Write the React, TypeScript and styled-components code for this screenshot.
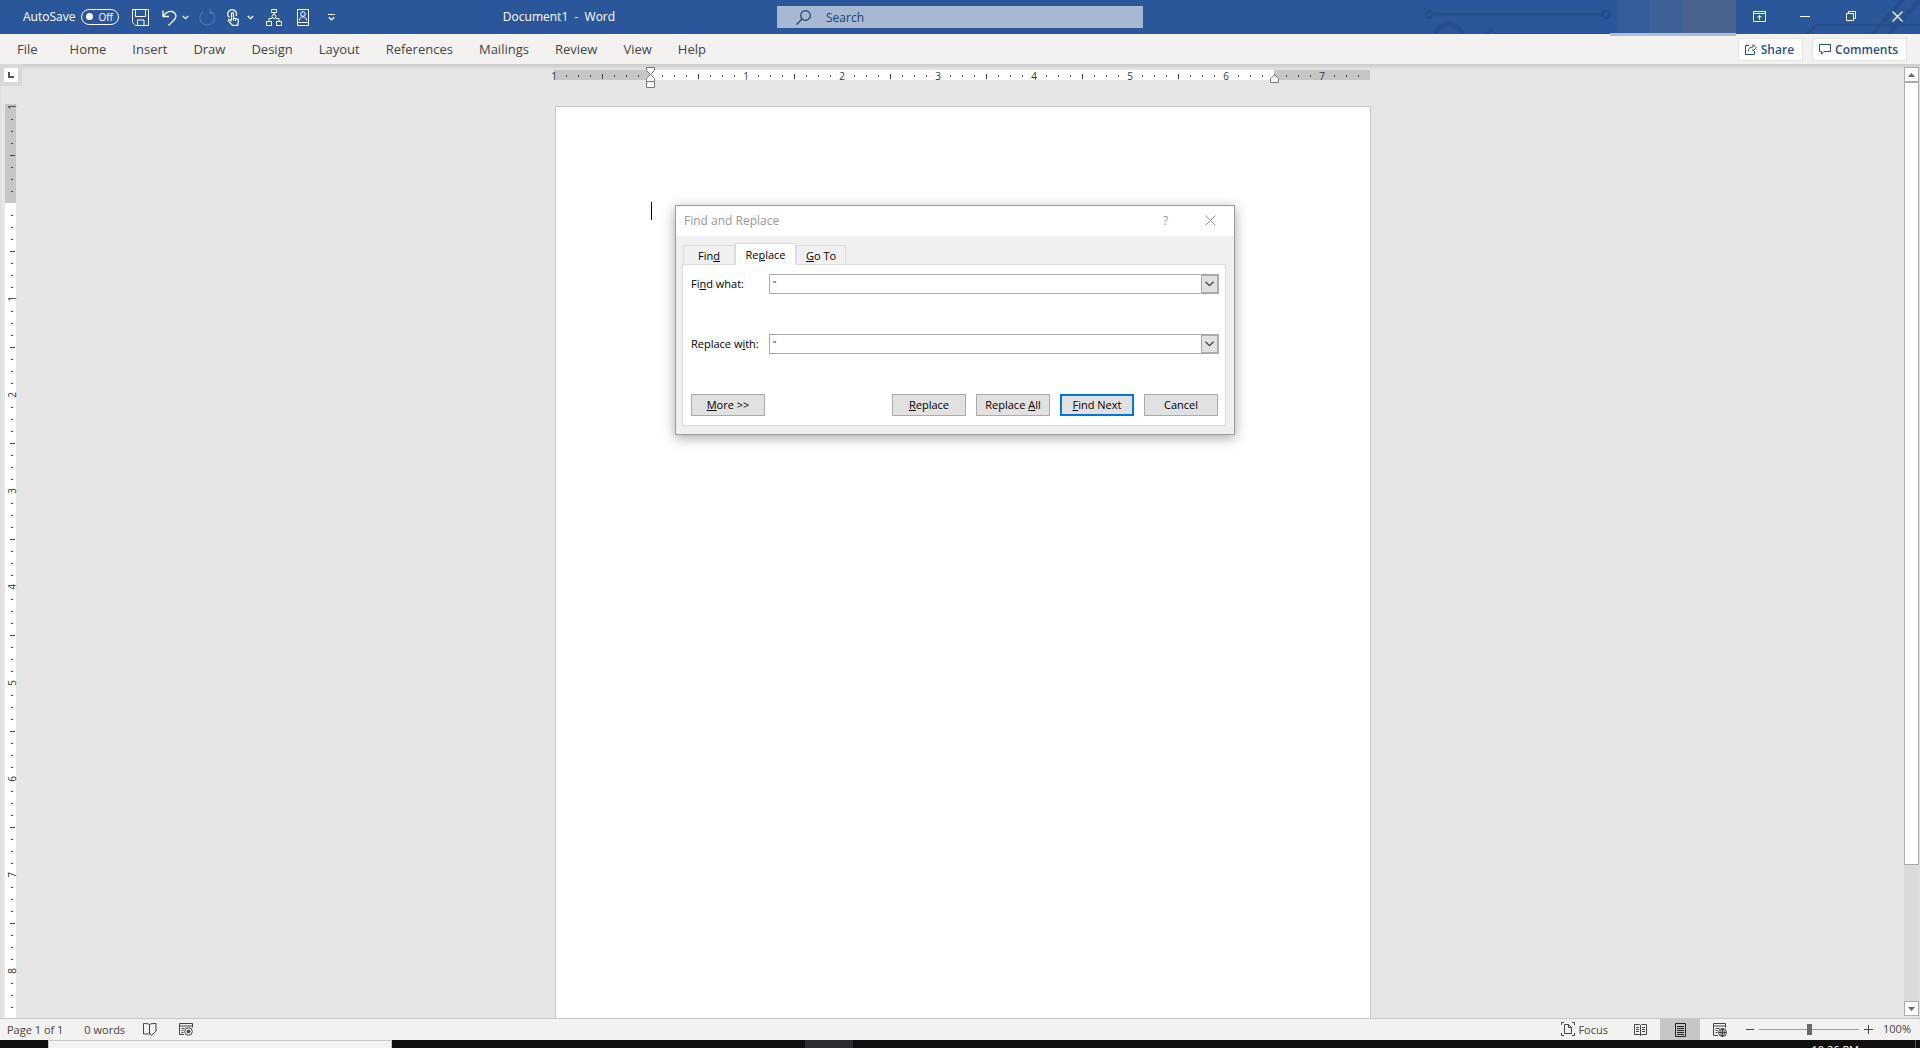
import React from "react";
import styled, { createGlobalStyle } from "styled-components";

const GlobalStyle = createGlobalStyle`
  * { box-sizing: border-box; }
  html, body { margin: 0; padding: 0; }
  body, button, input {
    font-family: "Open Sans", "Noto Sans", sans-serif;
  }
  button, input { margin: 0; }
  button {
    padding: 0;
    border: 0;
    background: none;
    color: inherit;
    font-size: inherit;
    display: flex;
    align-items: center;
    justify-content: center;
    flex: none;
  }
  svg { display: block; flex: none; }
`;

const Window = styled.div`
  height: 100vh;
  display: flex;
  flex-direction: column;
  overflow: hidden;
  background: #e6e6e6;
`;

/* ---------- title bar ---------- */

const TitleBar = styled.header`
  position: relative;
  flex: none;
  height: 34px;
  display: grid;
  grid-template-columns: 1fr 366px 1fr;
  align-items: center;
  background: #2b579a;
  color: #fff;
  font-size: 12px;
`;

const TitleLeft = styled.div`
  display: flex;
  align-items: center;
  height: 34px;
  padding: 0 0 1px 23px;
`;

const AutoSave = styled.label`
  display: flex;
  align-items: center;
  gap: 6px;
  width: 96px;
`;

const Toggle = styled.span`
  display: flex;
  align-items: center;
  justify-content: space-between;
  width: 38px;
  height: 16px;
  padding: 0 5px 0 4px;
  border: 1px solid #fff;
  border-radius: 8px;
  font-size: 10px;
  line-height: 14px;

  &::before {
    content: "";
    width: 7px;
    height: 7px;
    border-radius: 50%;
    background: #fff;
  }
`;

const HiddenCheck = styled.input`
  position: absolute;
  opacity: 0;
  width: 1px;
  height: 1px;
`;

const QuickTools = styled.div`
  display: flex;
  align-items: center;
  padding: 2px 0 0 13px;
`;

const QuickButton = styled.button<{ $after: number }>`
  height: 20px;
  margin-right: ${(p) => p.$after}px;
`;

const DocTitle = styled.div`
  flex: 1;
  text-align: center;
  white-space: pre;
`;

const SearchBox = styled.label`
  display: flex;
  align-items: center;
  gap: 15px;
  height: 22px;
  padding-left: 19px;
  background: #a6b8d3;
  color: #1e3e70;
`;

const SearchInput = styled.input`
  flex: 1;
  min-width: 0;
  padding: 0;
  border: 0;
  outline: 0;
  background: none;
  font-size: 12px;
  color: #1e3e70;
  &::placeholder { color: #1e3e70; opacity: 1; }
`;

const TitleRight = styled.div`
  position: relative;
  display: flex;
  justify-content: flex-end;
  height: 34px;
`;

const Artwork = styled.svg`
  position: absolute;
  right: 0;
  top: 0;
`;

const Account = styled.div`
  position: relative;
  width: 126px;
  height: 36px;
  padding-left: 7px;
  display: grid;
  grid-template-columns: 33px 33px 1fr;
  z-index: 1;

  &::after {
    content: "";
    position: absolute;
    left: 0;
    right: 0;
    bottom: 0;
    height: 3px;
    background: #b3bbd5;
  }
`;

const Shade = styled.span<{ $tone: string }>`
  background: ${(p) => p.$tone};
`;

const WindowButton = styled.button`
  position: relative;
  width: 46px;
  height: 32px;
`;

/* ---------- ribbon tabs ---------- */

const TabBar = styled.nav`
  flex: none;
  display: flex;
  align-items: center;
  height: 30px;
  padding: 0 13px 0 4px;
  background: #f3f2f1;
  color: #444;
  font-size: 13px;
`;

const RibbonTab = styled.button`
  height: 30px;
  padding: 0 13px;
  &:first-child { margin-right: 6px; }
`;

const RibbonActions = styled.div`
  margin-left: auto;
  display: flex;
  gap: 9px;
`;

const ActionButton = styled.button`
  height: 23px;
  padding: 0 8px 0 6px;
  gap: 4px;
  border: 1px solid #e6e4e2;
  background: #fff;
  color: #2b4f84;
  font-size: 12px;
  font-weight: 600;
`;

/* ---------- workspace ---------- */

const Workspace = styled.main`
  flex: 1;
  min-height: 0;
  display: grid;
  grid-template-columns: 22px 1fr 16px;
  overflow: hidden;
  background: #e6e6e6;
  box-shadow: inset 0 4px 4px -1px #cacaca;
`;

const Gutter = styled.div`
  display: flex;
  flex-direction: column;
  min-height: 0;
  overflow: hidden;
`;

const TabSelector = styled.button`
  width: 22px;
  height: 22px;
  border: 4px solid #d8d8d8;
  background: #fff;
`;

const SideRuler = styled.div`
  flex: 1;
  width: 11px;
  margin: 18px 0 0 5px;
  min-height: 0;
  background: linear-gradient(#c6c6c6 99px, #fff 99px);
`;

const SideCell = styled.div`
  height: 12px;
  margin-left: 3px;
  display: flex;
  align-items: center;
  justify-content: center;
  &:first-child { margin-top: -3px; }
`;

const Canvas = styled.div`
  min-width: 0;
  min-height: 0;
  display: flex;
  flex-direction: column;
  align-items: center;
  padding-top: 6px;
  overflow: hidden;
`;

const TopRuler = styled.div`
  position: relative;
  flex: none;
  display: flex;
  width: 816px;
  height: 10px;
  margin-right: 2px;
  background: linear-gradient(90deg, #c6c6c6 96px, #fff 96px, #fff 720px, #c6c6c6 720px);
`;

const TopCell = styled.div`
  flex: none;
  width: 12px;
  height: 12px;
  display: flex;
  align-items: center;
  justify-content: center;
  &:first-child { margin-left: -6px; }
`;

const Tick = styled.span<{ $w: number; $h: number }>`
  width: ${(p) => p.$w}px;
  height: ${(p) => p.$h}px;
  background: #444;
`;

const RulerNumber = styled.span<{ $side?: boolean }>`
  font-size: 10px;
  line-height: 10px;
  color: #333;
  ${(p) => (p.$side ? "transform: rotate(-90deg);" : "")}
`;

const Marker = styled.svg<{ $x: number; $y: number }>`
  position: absolute;
  left: ${(p) => p.$x}px;
  top: ${(p) => p.$y}px;
`;

const Page = styled.article`
  position: relative;
  flex: none;
  width: 816px;
  height: 1056px;
  margin-top: 26px;
  border: 1px solid #c6c6c6;
  background: #fff;
`;

const Caret = styled.span`
  display: block;
  width: 1px;
  height: 18px;
  margin: 95px 0 0 95px;
  background: #000;
`;

const ScrollBar = styled.div`
  display: flex;
  flex-direction: column;
  min-height: 0;
  margin: 3px 1px 2px 0;
  background: #dadada;
`;

const ScrollButton = styled.button`
  height: 15px;
  border: 1px solid #ababab;
  background: #fff;
`;

const ScrollThumb = styled.div`
  flex: 783 1 0;
  border: 1px solid #ababab;
  background: #fff;
`;

const ScrollSpace = styled.div`
  flex: 136 1 0;
`;

/* ---------- find and replace dialog ---------- */

const Dialog = styled.section`
  position: absolute;
  left: 119px;
  top: 98px;
  width: 560px;
  padding-bottom: 8px;
  border: 1px solid #9b9b9b;
  background: #f0f0f0;
  box-shadow: 0 3px 12px rgba(0, 0, 0, 0.35);
  color: #000;
  font-size: 11px;
`;

const DialogHeader = styled.div`
  display: flex;
  align-items: center;
  height: 30px;
  padding: 0 1px 2px 8px;
  background: #fff;
  color: #999;
`;

const DialogTitle = styled.h1`
  flex: 1;
  margin: 0;
  font-size: 12px;
  font-weight: 400;
`;

const DialogIconButton = styled.button`
  width: 45px;
  height: 28px;
  font-size: 12px;
`;

const DialogTabs = styled.div`
  display: flex;
  align-items: flex-end;
  height: 28px;
  margin-left: 7px;
`;

const DialogTab = styled.button<{ $active?: boolean; $width: number }>`
  position: relative;
  z-index: ${(p) => (p.$active ? 1 : 0)};
  width: ${(p) => p.$width}px;
  height: ${(p) => (p.$active ? 22 : 19)}px;
  margin-bottom: ${(p) => (p.$active ? -1 : 0)}px;
  border: 1px solid #dcdcdc;
  border-bottom: 0;
  background: ${(p) => (p.$active ? "#fff" : "#f0f0f0")};
`;

const DialogPanel = styled.form`
  margin: 0 8px 0 6px;
  padding: 9px 6px 9px 8px;
  border: 1px solid #dcdcdc;
  background: #fff;
`;

const Field = styled.div`
  display: flex;
  align-items: center;
  height: 20px;
  margin-bottom: 40px;
`;

const FieldLabel = styled.label`
  width: 78px;
  line-height: 16px;
  padding-bottom: 1px;
`;

const Combo = styled.div`
  flex: 1;
  display: flex;
  height: 20px;
  border: 1px solid #ababab;
`;

const ComboInput = styled.input`
  flex: 1;
  min-width: 0;
  padding: 0 3px;
  border: 0;
  outline: 0;
  font-family: "Liberation Sans", sans-serif;
  font-size: 9px;
  color: #333;
`;

const ComboButton = styled.button`
  width: 17px;
  border: 1px solid #ababab;
  background: #e1e1e1;
`;

const ButtonRow = styled.div`
  display: flex;
  gap: 10px;
  padding-right: 1px;
`;

const PushButton = styled.button<{ $primary?: boolean }>`
  width: 74px;
  height: 22px;
  border: ${(p) => (p.$primary ? "2px solid #0078d7" : "1px solid #ababab")};
  background: #e1e1e1;
  white-space: pre;
  line-height: 16px;
  &:first-child { margin-right: auto; }
`;

/* ---------- status bar ---------- */

const StatusBar = styled.footer`
  flex: none;
  display: flex;
  align-items: flex-start;
  height: 22px;
  padding: 0 9px 0 7px;
  border-top: 1px solid #c6c6c6;
  background: #f3f2f1;
  color: #444;
  font-size: 11px;
`;

const StatusItem = styled.button<{ $after?: number }>`
  height: 20px;
  gap: 3px;
  margin-right: ${(p) => p.$after ?? 0}px;
`;

const StatusRight = styled.div`
  margin-left: auto;
  display: flex;
  align-items: flex-start;
`;

const ViewButton = styled.button<{ $active?: boolean }>`
  width: 40px;
  height: 21px;
  background: ${(p) => (p.$active ? "#c6c6c6" : "transparent")};
`;

const ZoomButton = styled.button`
  width: 19px;
  height: 20px;
`;

const ZoomSlider = styled.input`
  appearance: none;
  width: 100px;
  height: 20px;
  background: linear-gradient(#a0a0a0, #a0a0a0) center / 100% 1px no-repeat;
  &::-webkit-slider-thumb {
    appearance: none;
    width: 5px;
    height: 11px;
    background: #6a6a6a;
  }
`;

const ZoomValue = styled.output`
  width: 33px;
  line-height: 20px;
  text-align: right;
`;

/* ---------- desktop taskbar ---------- */

const Taskbar = styled.div`
  flex: none;
  display: flex;
  height: 8px;
  overflow: hidden;
  background: #101010;
  color: #fff;
`;

const TaskSearch = styled.div`
  width: 344px;
  margin-left: 48px;
  border: 1px solid #c6c6c6;
  border-bottom: 0;
  background: #f3f3f3;
`;

const TaskActive = styled.div`
  width: 48px;
  margin-left: 413px;
  background: #2c2c30;
`;

const Clock = styled.time`
  margin: 2px 56px 0 auto;
  font-size: 11px;
  line-height: 15px;
  white-space: nowrap;
`;

const DesktopEdge = styled.span`
  width: 5px;
  border-left: 1px solid #555;
`;

/* ---------- icons ---------- */

type IconProps = { w: number; h: number; children: React.ReactNode; color?: string };
const Icon = ({ w, h, children, color = "currentColor" }: IconProps) => (
  <svg width={w} height={h} viewBox={`0 0 ${w} ${h}`} fill="none" stroke={color} aria-hidden="true">
    {children}
  </svg>
);

const Chevron = () => (
  <Icon w={7} h={5}><path d="M.8 1l2.7 2.6L6.2 1" strokeWidth="1.3" /></Icon>
);

const Artworks = () => (
  <Artwork width="520" height="34" viewBox="0 0 520 34" fill="none" stroke="#264e8c" aria-hidden="true">
    <circle cx="29" cy="14.500" r="3.500" strokeWidth="2.500" />
    <path d="M33 14.500h170" strokeWidth="3.500" />
    <circle cx="206" cy="14.500" r="3.500" strokeWidth="2.500" />
    <circle cx="49" cy="38" r="14" strokeWidth="5" />
    <circle cx="91" cy="33" r="3" strokeWidth="2.500" />
    <path d="M95 34h130" strokeWidth="2" />
    <path d="M407 34l9-9h104" strokeWidth="2.500" />
    <path d="M472 34L503 0M489 34L520 0" strokeWidth="4" />
  </Artwork>
);

/* ---------- rulers ---------- */

const inchMark = (eighth: number) => {
  const offset = eighth - 8;
  if (offset === 0) return "none";
  if (offset % 8 === 0) return String(Math.abs(offset / 8));
  return offset % 4 === 0 ? "half" : "dot";
};

const topMarks = Array.from({ length: 68 }, (_, i) => inchMark(i));
const sideMarks = Array.from({ length: 77 }, (_, i) => inchMark(i));

const HorizontalRuler = () => (
  <TopRuler>
    {topMarks.map((m, i) => (
      <TopCell key={i}>
        {m === "half" ? <Tick $w={1} $h={5} /> : m === "dot" ? <Tick $w={1} $h={2} /> : m !== "none" && <RulerNumber>{m}</RulerNumber>}
      </TopCell>
    ))}
    <Marker $x={92} $y={-3} width="9" height="22" viewBox="0 0 9 22" fill="#fff" stroke="#777" aria-hidden="true">
      <path d="M.5.500h8v3l-4 4-4-4zM4.500 7.500l4 4v3h-8v-3zM.5 14.500h8v6h-8z" />
    </Marker>
    <Marker $x={716} $y={4} width="9" height="9" viewBox="0 0 9 9" fill="#fff" stroke="#777" aria-hidden="true">
      <path d="M4.500.700l4 4v3.800h-8V4.700z" />
    </Marker>
  </TopRuler>
);

const VerticalRuler = () => (
  <SideRuler>
    {sideMarks.map((m, i) => (
      <SideCell key={i}>
        {m === "half" ? <Tick $w={5} $h={1} /> : m === "dot" ? <Tick $w={2} $h={1} /> : m !== "none" && <RulerNumber $side>{m}</RulerNumber>}
      </SideCell>
    ))}
  </SideRuler>
);

const FindReplace = () => (
  <Dialog role="dialog" aria-labelledby="dialog-title">
    <DialogHeader>
      <DialogTitle id="dialog-title">Find and Replace</DialogTitle>
      <DialogIconButton type="button" aria-label="Help">?</DialogIconButton>
      <DialogIconButton type="button" aria-label="Close">
        <Icon w={11} h={11}><path d="M.5.500l10 10M10.500.500l-10 10" /></Icon>
      </DialogIconButton>
    </DialogHeader>
    <DialogTabs role="tablist">
      <DialogTab type="button" role="tab" $width={52}><span>Fin<u>d</u></span></DialogTab>
      <DialogTab type="button" role="tab" aria-selected="true" $active $width={61}><span>Re<u>p</u>lace</span></DialogTab>
      <DialogTab type="button" role="tab" $width={50}><span><u>G</u>o To</span></DialogTab>
    </DialogTabs>
    <DialogPanel>
      <Field>
        <FieldLabel htmlFor="find-what">Fi<u>n</u>d what:</FieldLabel>
        <Combo>
          <ComboInput id="find-what" defaultValue={'"'} />
          <ComboButton type="button" aria-label="Recent searches">
            <Icon w={9} h={6} color="#444"><path d="M.5.700l4 4 4-4" strokeWidth="1.300" /></Icon>
          </ComboButton>
        </Combo>
      </Field>
      <Field>
        <FieldLabel htmlFor="replace-with">Replace w<u>i</u>th:</FieldLabel>
        <Combo>
          <ComboInput id="replace-with" defaultValue={'"'} />
          <ComboButton type="button" aria-label="Recent replacements">
            <Icon w={9} h={6} color="#444"><path d="M.5.700l4 4 4-4" strokeWidth="1.300" /></Icon>
          </ComboButton>
        </Combo>
      </Field>
      <ButtonRow>
        <PushButton type="button"><span><u>M</u>ore &gt;&gt;</span></PushButton>
        <PushButton type="button"><span><u>R</u>eplace</span></PushButton>
        <PushButton type="button"><span>Replace <u>A</u>ll</span></PushButton>
        <PushButton type="button" $primary><span><u>F</u>ind Next</span></PushButton>
        <PushButton type="button">Cancel</PushButton>
      </ButtonRow>
    </DialogPanel>
  </Dialog>
);

const ribbonTabs = ["File", "Home", "Insert", "Draw", "Design", "Layout", "References", "Mailings", "Review", "View", "Help"];

export default function App() {
  return (
    <Window>
      <GlobalStyle />
      <TitleBar>
        <TitleLeft>
          <AutoSave>
            AutoSave
            <HiddenCheck type="checkbox" />
            <Toggle>Off</Toggle>
          </AutoSave>
          <QuickTools>
            <QuickButton $after={13} aria-label="Save">
              <Icon w={17} h={17}>
                <path d="M.5.500h16v16H3.500l-3-3zM3.500.500v7h10v-7M5.500 16v-5h6.500v5" />
              </Icon>
            </QuickButton>
            <QuickButton $after={5} aria-label="Undo">
              <Icon w={15} h={16}>
                <path d="M1 .5v6h6M1.200 6.200C4 2.500 7 1 10 1.500c4 .8 5 5 2.500 8L6.500 15.500" strokeWidth="1.300" />
              </Icon>
            </QuickButton>
            <QuickButton $after={10} aria-label="Undo list"><Chevron /></QuickButton>
            <QuickButton $after={11} aria-label="Redo">
              <Icon w={17} h={17} color="#4a74b4">
                <path d="M11 .5v4h4.500M12 2.500a7.300 7.300 0 1 1-7.500 0" strokeWidth="1.200" />
              </Icon>
            </QuickButton>
            <QuickButton $after={8} aria-label="Touch mode">
              <Icon w={12} h={17}>
                <path d="M2.500 8.500a4.300 4.300 0 1 1 6.500-1.500M4.500 11V4.500c0-1.300 2-1.300 2 0V9l4 1c.8.300 1 .8.900 1.500l-.6 4.800H5.500L1.500 12c-.6-1 .6-2 1.500-1.200l1.500 1.400M6.500 9v2.500M8.500 9.500V12" strokeWidth="1.200" />
              </Icon>
            </QuickButton>
            <QuickButton $after={12} aria-label="Touch mode list"><Chevron /></QuickButton>
            <QuickButton $after={15} aria-label="Organization chart">
              <Icon w={16} h={17}>
                <path d="M5.500.500h5v3h-5zM.5 12.500h5v4h-5zM10.500 12.500h5v4h-5zM8 3.500v2M3 12.500v-3h3M13 12.500v-3h-3" />
                <circle cx="8" cy="7.500" r="2" />
              </Icon>
            </QuickButton>
            <QuickButton $after={19} aria-label="Address book">
              <Icon w={12} h={17}>
                <path d="M.5.500h11v16H.5zM.5 13.500h11M2.500 11.500c0-5 7-5 7 0" />
                <circle cx="6" cy="5" r="2.300" />
              </Icon>
            </QuickButton>
            <QuickButton $after={6} aria-label="Customize toolbar">
              <Icon w={7} h={7}><path d="M0 .5h7M.8 3.200l2.700 2.600 2.700-2.600" strokeWidth="1.200" /></Icon>
            </QuickButton>
          </QuickTools>
          <DocTitle>{"Document1  -  Word"}</DocTitle>
        </TitleLeft>
        <SearchBox>
          <Icon w={15} h={15}>
            <circle cx="9.500" cy="5.500" r="4.800" strokeWidth="1.200" />
            <path d="M6 9L.5 14.500" strokeWidth="1.300" />
          </Icon>
          <SearchInput aria-label="Search" placeholder="Search" />
        </SearchBox>
        <TitleRight>
          <Artworks />
          <Account>
            <Shade $tone="#345e9b" />
            <Shade $tone="#3d6297" />
            <Shade $tone="#4a638f" />
          </Account>
          <WindowButton aria-label="Ribbon display options">
            <Icon w={13} h={11}><path d="M.5.500h12v10H.5zM.5 2.500h12M6.500 9V4.500M4.300 6.500l2.200-2 2.200 2" /></Icon>
          </WindowButton>
          <WindowButton aria-label="Minimize">
            <Icon w={10} h={1}><path d="M0 .5h10" /></Icon>
          </WindowButton>
          <WindowButton aria-label="Restore">
            <Icon w={10} h={10}><path d="M.5 2.500h7v7h-7zM2.500 2.500v-2h7v7h-2" /></Icon>
          </WindowButton>
          <WindowButton aria-label="Close">
            <Icon w={11} h={11}><path d="M.5.500l10 10M10.500.500l-10 10" strokeWidth="1.200" /></Icon>
          </WindowButton>
        </TitleRight>
      </TitleBar>

      <TabBar>
        {ribbonTabs.map((t) => <RibbonTab key={t}>{t}</RibbonTab>)}
        <RibbonActions>
          <ActionButton>
            <Icon w={12} h={12}><path d="M4 2.500H.5v9h9V8M3 8.500c.3-3 2-4.500 5-4.500V1.500l3.300 3.300L8 8V5.800" /></Icon>
            Share
          </ActionButton>
          <ActionButton>
            <Icon w={12} h={11}><path d="M.5.500h11v7H5l-2.500 2.700V7.500h-2z" /></Icon>
            Comments
          </ActionButton>
        </RibbonActions>
      </TabBar>

      <Workspace>
        <Gutter>
          <TabSelector aria-label="Tab selector">
            <Icon w={6} h={6} color="#555"><path d="M1 0v5h5" strokeWidth="2" /></Icon>
          </TabSelector>
          <VerticalRuler />
        </Gutter>
        <Canvas>
          <HorizontalRuler />
          <Page>
            <Caret />
            <FindReplace />
          </Page>
        </Canvas>
        <ScrollBar>
          <ScrollButton aria-label="Scroll up">
            <Icon w={7} h={4} color="none"><path d="M0 4l3.500-4L7 4z" fill="#666" /></Icon>
          </ScrollButton>
          <ScrollThumb />
          <ScrollSpace />
          <ScrollButton aria-label="Scroll down">
            <Icon w={7} h={4} color="none"><path d="M0 0l3.500 4L7 0z" fill="#666" /></Icon>
          </ScrollButton>
        </ScrollBar>
      </Workspace>

      <StatusBar>
        <StatusItem $after={21}>Page 1 of 1</StatusItem>
        <StatusItem $after={18}>0 words</StatusItem>
        <StatusItem $after={22} aria-label="Proofing">
          <Icon w={14} h={13}><path d="M6.500 11.500V1.500C5 .5 3 .5.500.500v10.500h5M6.500 1.500C8 .5 10 .5 13 .5v7.500M6 9.500l2.500 3 5-5" /></Icon>
        </StatusItem>
        <StatusItem aria-label="Record macro">
          <Icon w={14} h={13}>
            <path d="M5 11.500H.5V.5h13v4M.5 3h13M2.500 5.500h3M2.500 7.500h2M2.500 9.500h2" />
            <circle cx="9.500" cy="8.500" r="3.800" />
            <circle cx="9.500" cy="8.500" r="1.500" fill="currentColor" />
          </Icon>
        </StatusItem>
        <StatusRight>
          <StatusItem $after={12}>
            <Icon w={14} h={14}>
              <path d="M3 .5H.5V3M11 .5h2.500V3M.5 11v2.500H3M13.500 11v2.500H11M3.500 2.500h4l3 3v6h-7zM7.500 2.500v3h3" />
            </Icon>
            Focus
          </StatusItem>
          <ViewButton aria-label="Read mode">
            <Icon w={13} h={12}><path d="M6.500 11.500V1.500L5.500.5h-5v10h5zM6.500 1.500l1-1h5v10h-5l-1 1M2 3.500h3M2 5.500h3M2 7.500h3M8 3.500h3M8 5.500h3M8 7.500h3" /></Icon>
          </ViewButton>
          <ViewButton $active aria-label="Print layout">
            <Icon w={11} h={14} color="#222"><path d="M.5.500h10v13H.5zM2 3.500h7M2 5.500h7M2 7.500h7M2 9.500h7M2 11.500h7" /></Icon>
          </ViewButton>
          <ViewButton aria-label="Web layout">
            <Icon w={14} h={14}>
              <path d="M5 12.500H.5V.5h12v4M.5 3h12M2.500 5.500h4M2.500 7.500h2M2.500 9.500h2M5.500 9.500h8M9.500 5.500v8" />
              <circle cx="9.500" cy="9.500" r="4" />
              <ellipse cx="9.500" cy="9.500" rx="1.800" ry="4" />
            </Icon>
          </ViewButton>
          <ZoomButton aria-label="Zoom out"><Icon w={8} h={1}><path d="M0 .5h8" /></Icon></ZoomButton>
          <ZoomSlider type="range" min={0} max={100} defaultValue={50} aria-label="Zoom" />
          <ZoomButton aria-label="Zoom in"><Icon w={9} h={9}><path d="M0 4.500h9M4.500 0v9" /></Icon></ZoomButton>
          <ZoomValue>100%</ZoomValue>
        </StatusRight>
      </StatusBar>

      <Taskbar>
        <TaskSearch />
        <TaskActive />
        <Clock>10:26 PM</Clock>
        <DesktopEdge />
      </Taskbar>
    </Window>
  );
}
